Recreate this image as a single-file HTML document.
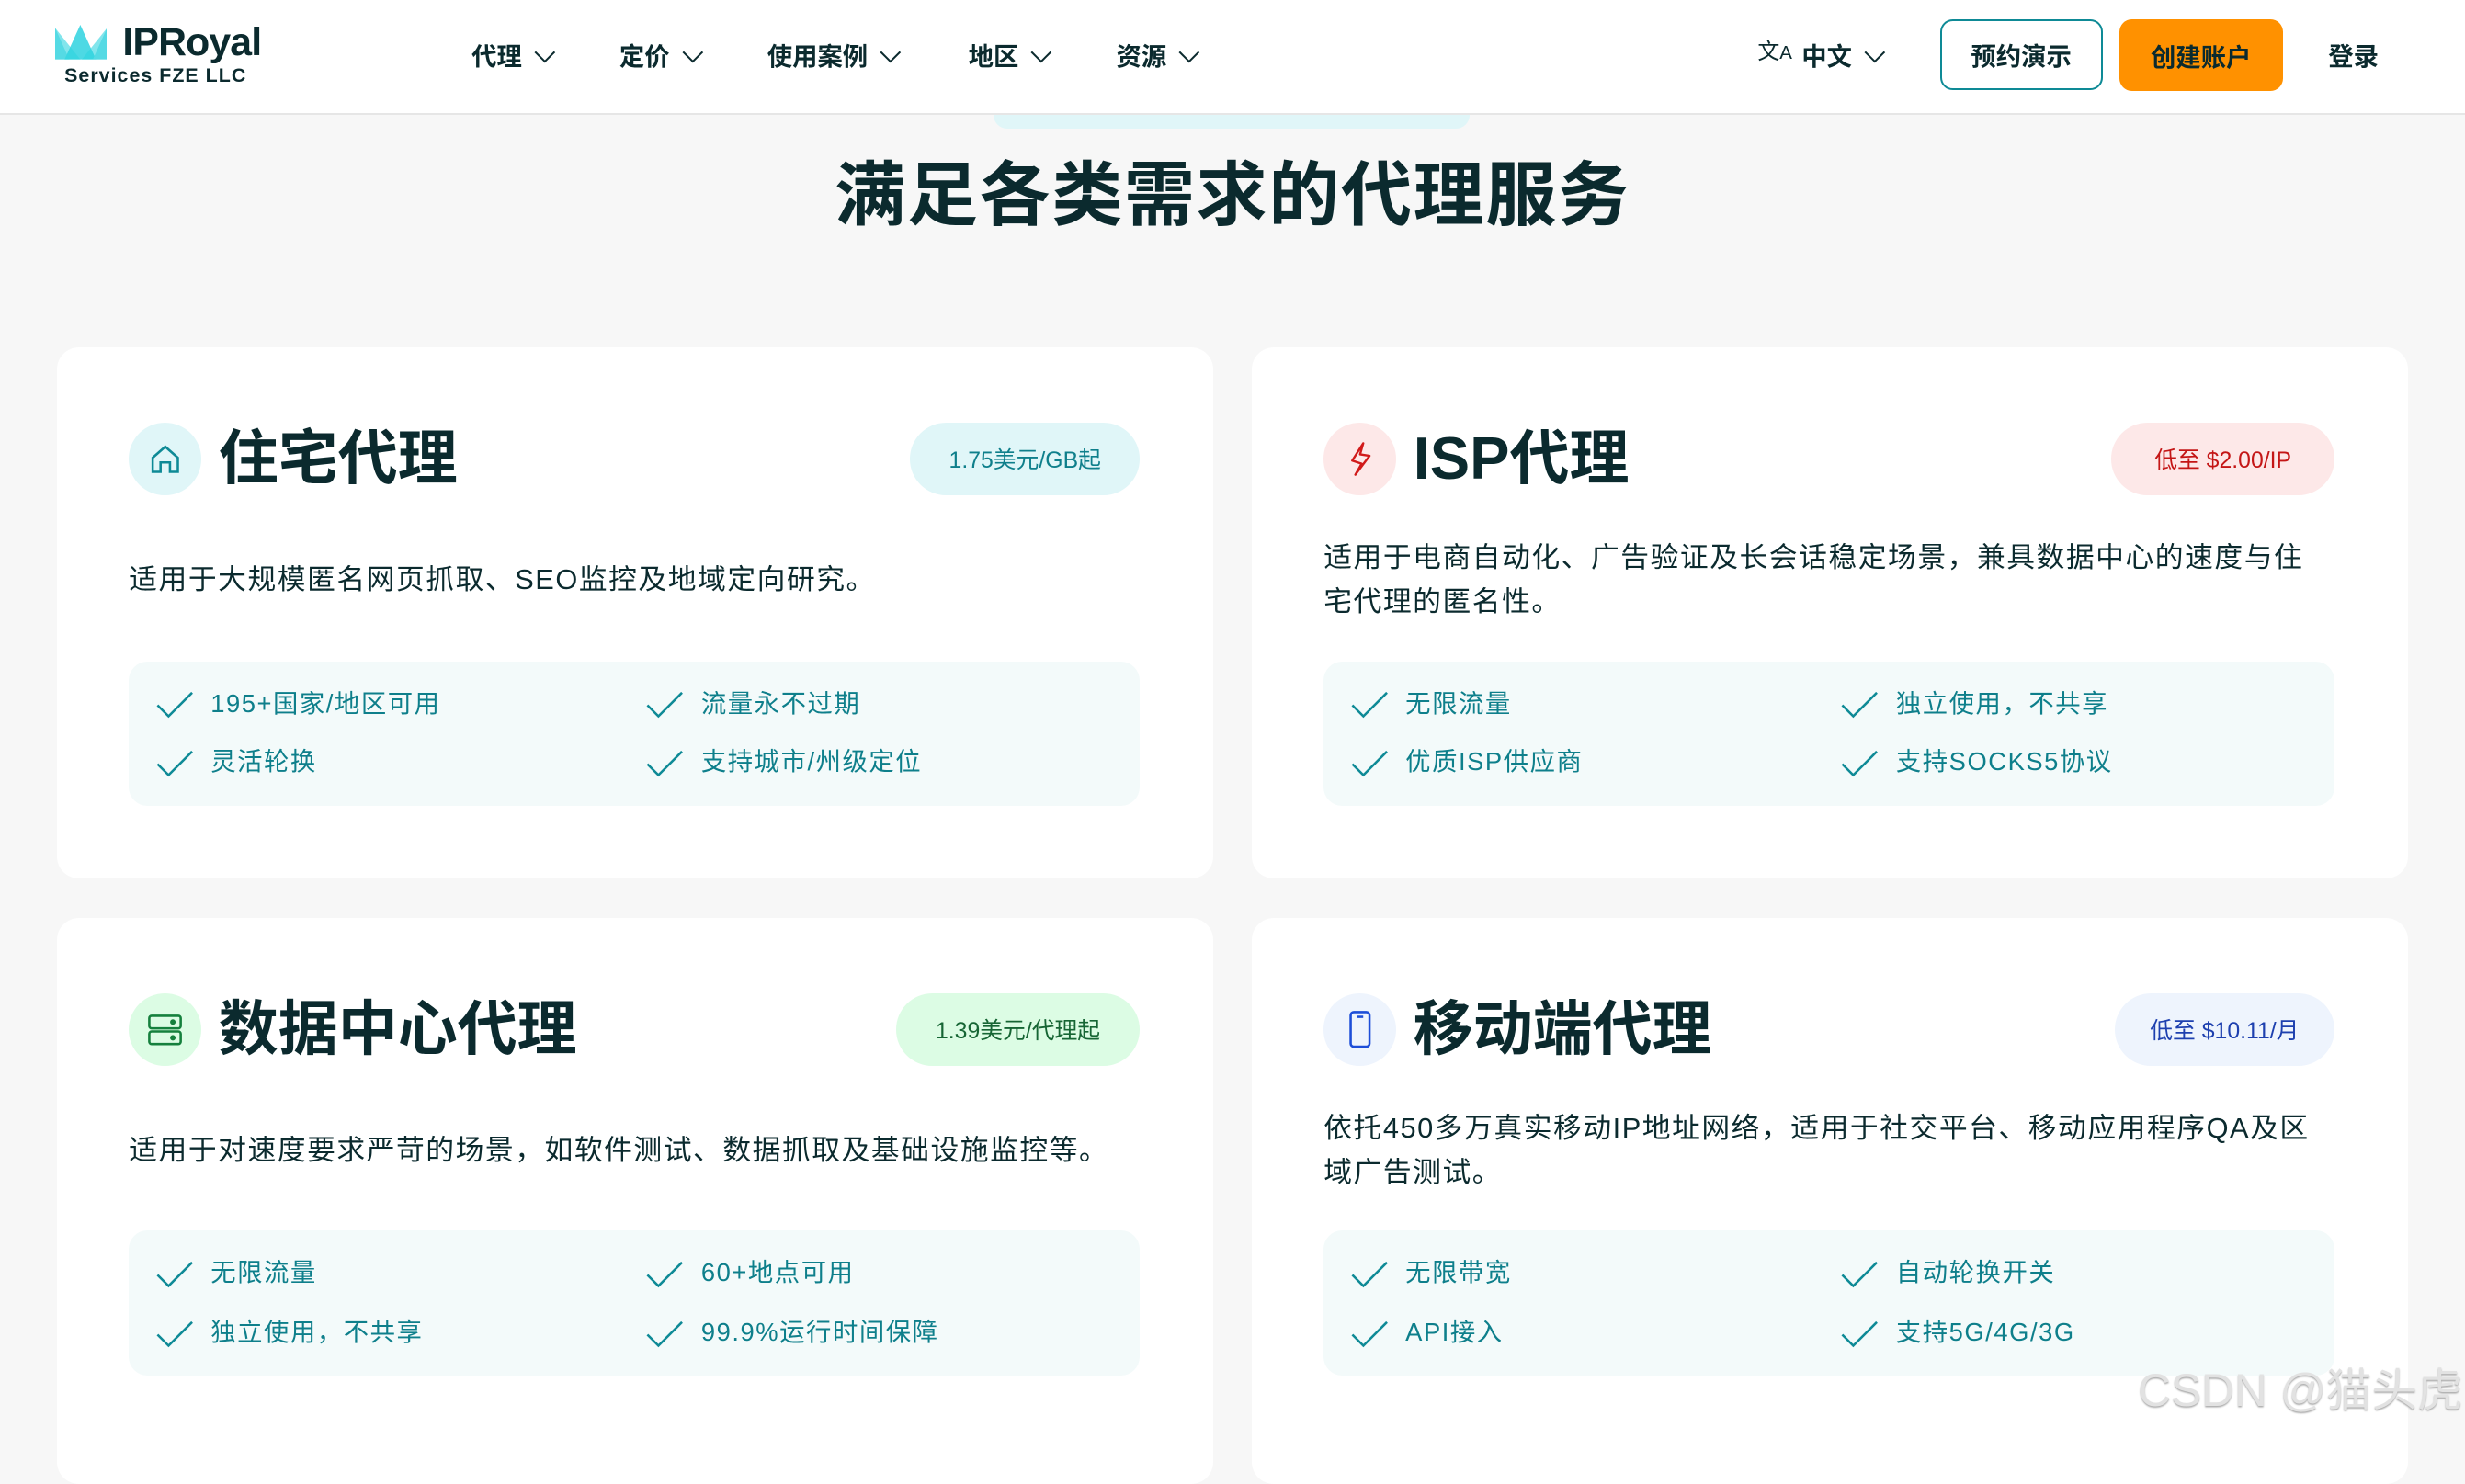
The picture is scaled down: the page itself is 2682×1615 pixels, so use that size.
<!DOCTYPE html>
<html><head><meta charset="utf-8"><style>
html,body{margin:0;padding:0}
body{width:1568px;height:910px;zoom:1.7105;overflow:hidden;background:#f7f7f7;font-family:"Liberation Sans","Noto Sans CJK SC",sans-serif;color:#0b2a2e;position:relative}
.a{position:absolute}
.hdr{left:0;top:0;width:1568px;height:72px;background:#fff;border-bottom:1.5px solid #e6e6e6}
.nav{top:23px;font-size:16px;font-weight:bold;white-space:nowrap}
.chev{display:inline-block;width:8px;height:8px;border-right:1.3px solid #0b2a2e;border-bottom:1.3px solid #0b2a2e;transform:rotate(45deg);margin-left:10px;position:relative;top:-4px}
.card{background:#fff;border-radius:14px}
.ic{width:46px;height:46px;border-radius:50%;display:flex;align-items:center;justify-content:center}
.ttl{font-size:38px;font-weight:bold;white-space:nowrap;line-height:46px}
.badge{height:46px;border-radius:23px;font-size:14.5px;display:flex;align-items:center;justify-content:center;white-space:nowrap}
.desc{font-size:18px;line-height:28px;white-space:nowrap;letter-spacing:.9px}
.feat{background:#f3fafa;border-radius:12px;width:643px;height:92px}
.f{font-size:16px;color:#0e7f8b;white-space:nowrap;line-height:20px;letter-spacing:.9px}
.f svg{position:absolute;left:-36px;top:-1px}
</style></head><body>
<div class="a hdr"></div>
<svg class="a" style="left:35px;top:16px" width="33" height="22" viewBox="0 0 33 22"><path d="M0 2 L9 22 L0 22Z" fill="#8fe3ea"/><path d="M16 0 L6 22 L26 22Z" fill="#4dd9e4"/><path d="M33 2 L24 22 L33 22Z" fill="#8fe3ea"/><path d="M0 2 L16 22 L0 22Z" fill="#2fd3df" opacity=".6"/><path d="M33 2 L17 22 L33 22Z" fill="#2fd3df" opacity=".6"/></svg>
<div class="a" style="left:78px;top:13px;font-size:25px;font-weight:bold;letter-spacing:-.5px">IPRoyal</div>
<div class="a" style="left:41px;top:41px;font-size:12.5px;font-weight:bold;letter-spacing:.6px">Services FZE LLC</div>
<div class="a nav" style="left:300px">代理<span class="chev"></span></div>
<div class="a nav" style="left:394px">定价<span class="chev"></span></div>
<div class="a nav" style="left:488px">使用案例<span class="chev"></span></div>
<div class="a nav" style="left:616px">地区<span class="chev"></span></div>
<div class="a nav" style="left:710px">资源<span class="chev"></span></div>
<div class="a" style="left:1118px;top:25px;font-size:14px;line-height:16px">文<span style="font-size:12px">A</span></div>
<div class="a nav" style="left:1146px">中文<span class="chev"></span></div>
<div class="a" style="left:1234px;top:12px;width:101px;height:43px;border:1.5px solid #0e8a96;border-radius:8px;display:flex;align-items:center;justify-content:center;font-size:16px;font-weight:bold">预约演示</div>
<div class="a" style="left:1348px;top:12px;width:104px;height:46px;background:#ff9100;border-radius:8px;display:flex;align-items:center;justify-content:center;font-size:16px;font-weight:bold">创建账户</div>
<div class="a nav" style="left:1481px">登录</div>
<div class="a" style="left:632px;top:73px;width:303px;height:9px;background:#e0f6f8;border-radius:0 0 14px 14px"></div>
<div class="a" style="left:0;width:1568px;top:96px;text-align:center;font-size:45px;font-weight:bold;line-height:58px;letter-spacing:1px">满足各类需求的代理服务</div>

<div class="a card" style="left:36px;top:221px;width:736px;height:338px"></div>
<div class="a ic" style="left:82px;top:269px;background:#e0f6f8"><svg width="22" height="22" viewBox="0 0 22 22" fill="none" stroke="#0e8a96" stroke-width="1.5"><path d="M3 10 L11 3 L19 10 V19 H14 V13 H8 V19 H3Z"/></svg></div>
<div class="a ttl" style="left:139px;top:269px">住宅代理</div>
<div class="a badge" style="left:579px;top:269px;width:146px;background:#e0f6f8;color:#0e7f8b">1.75美元/GB起</div>
<div class="a desc" style="left:82px;top:355px">适用于大规模匿名网页抓取、SEO监控及地域定向研究。</div>
<div class="a feat" style="left:82px;top:421px"></div>
<div class="a f" style="left:134px;top:438px"><svg width="26" height="22" viewBox="0 0 26 22" fill="none" stroke="#0e8a96" stroke-width="1.5"><path d="M2 12 L9 19 L24 4"/></svg>195+国家/地区可用</div>
<div class="a f" style="left:446px;top:438px"><svg width="26" height="22" viewBox="0 0 26 22" fill="none" stroke="#0e8a96" stroke-width="1.5"><path d="M2 12 L9 19 L24 4"/></svg>流量永不过期</div>
<div class="a f" style="left:134px;top:475px"><svg width="26" height="22" viewBox="0 0 26 22" fill="none" stroke="#0e8a96" stroke-width="1.5"><path d="M2 12 L9 19 L24 4"/></svg>灵活轮换</div>
<div class="a f" style="left:446px;top:475px"><svg width="26" height="22" viewBox="0 0 26 22" fill="none" stroke="#0e8a96" stroke-width="1.5"><path d="M2 12 L9 19 L24 4"/></svg>支持城市/州级定位</div>

<div class="a card" style="left:796px;top:221px;width:736px;height:338px"></div>
<div class="a ic" style="left:842px;top:269px;background:#fde8e8"><svg width="22" height="24" viewBox="0 0 22 24" fill="none" stroke="#d11a1a" stroke-width="1.4" stroke-linejoin="round"><path d="M13 2 L6 13 L12 15 L8 22 L17 10 L11 9Z"/></svg></div>
<div class="a ttl" style="left:899px;top:269px">ISP代理</div>
<div class="a badge" style="left:1343px;top:269px;width:142px;background:#fde8e8;color:#c41616">低至 $2.00/IP</div>
<div class="a desc" style="left:842px;top:341px">适用于电商自动化、广告验证及长会话稳定场景，兼具数据中心的速度与住<br>宅代理的匿名性。</div>
<div class="a feat" style="left:842px;top:421px"></div>
<div class="a f" style="left:894px;top:438px"><svg width="26" height="22" viewBox="0 0 26 22" fill="none" stroke="#0e8a96" stroke-width="1.5"><path d="M2 12 L9 19 L24 4"/></svg>无限流量</div>
<div class="a f" style="left:1206px;top:438px"><svg width="26" height="22" viewBox="0 0 26 22" fill="none" stroke="#0e8a96" stroke-width="1.5"><path d="M2 12 L9 19 L24 4"/></svg>独立使用，不共享</div>
<div class="a f" style="left:894px;top:475px"><svg width="26" height="22" viewBox="0 0 26 22" fill="none" stroke="#0e8a96" stroke-width="1.5"><path d="M2 12 L9 19 L24 4"/></svg>优质ISP供应商</div>
<div class="a f" style="left:1206px;top:475px"><svg width="26" height="22" viewBox="0 0 26 22" fill="none" stroke="#0e8a96" stroke-width="1.5"><path d="M2 12 L9 19 L24 4"/></svg>支持SOCKS5协议</div>

<div class="a card" style="left:36px;top:584px;width:736px;height:360px"></div>
<div class="a ic" style="left:82px;top:632px;background:#dcfce4"><svg width="24" height="22" viewBox="0 0 24 22" fill="none" stroke="#15803d" stroke-width="1.5"><rect x="2" y="2" width="20" height="8" rx="1.5"/><rect x="2" y="12" width="20" height="8" rx="1.5"/><circle cx="17" cy="6" r="1" fill="#15803d"/><circle cx="17" cy="16" r="1" fill="#15803d"/></svg></div>
<div class="a ttl" style="left:139px;top:632px">数据中心代理</div>
<div class="a badge" style="left:570px;top:632px;width:155px;background:#dcfce4;color:#166534">1.39美元/代理起</div>
<div class="a desc" style="left:82px;top:718px">适用于对速度要求严苛的场景，如软件测试、数据抓取及基础设施监控等。</div>
<div class="a feat" style="left:82px;top:783px"></div>
<div class="a f" style="left:134px;top:800px"><svg width="26" height="22" viewBox="0 0 26 22" fill="none" stroke="#0e8a96" stroke-width="1.5"><path d="M2 12 L9 19 L24 4"/></svg>无限流量</div>
<div class="a f" style="left:446px;top:800px"><svg width="26" height="22" viewBox="0 0 26 22" fill="none" stroke="#0e8a96" stroke-width="1.5"><path d="M2 12 L9 19 L24 4"/></svg>60+地点可用</div>
<div class="a f" style="left:134px;top:838px"><svg width="26" height="22" viewBox="0 0 26 22" fill="none" stroke="#0e8a96" stroke-width="1.5"><path d="M2 12 L9 19 L24 4"/></svg>独立使用，不共享</div>
<div class="a f" style="left:446px;top:838px"><svg width="26" height="22" viewBox="0 0 26 22" fill="none" stroke="#0e8a96" stroke-width="1.5"><path d="M2 12 L9 19 L24 4"/></svg>99.9%运行时间保障</div>

<div class="a card" style="left:796px;top:584px;width:736px;height:360px"></div>
<div class="a ic" style="left:842px;top:632px;background:#eef4fd"><svg width="22" height="26" viewBox="0 0 22 26" fill="none" stroke="#1d4ed8" stroke-width="1.5"><rect x="5" y="2" width="12" height="22" rx="2"/><path d="M9 5 H13"/></svg></div>
<div class="a ttl" style="left:899px;top:632px">移动端代理</div>
<div class="a badge" style="left:1345px;top:632px;width:140px;background:#eef4fd;color:#1e40af">低至 $10.11/月</div>
<div class="a desc" style="left:842px;top:704px">依托450多万真实移动IP地址网络，适用于社交平台、移动应用程序QA及区<br>域广告测试。</div>
<div class="a feat" style="left:842px;top:783px"></div>
<div class="a f" style="left:894px;top:800px"><svg width="26" height="22" viewBox="0 0 26 22" fill="none" stroke="#0e8a96" stroke-width="1.5"><path d="M2 12 L9 19 L24 4"/></svg>无限带宽</div>
<div class="a f" style="left:1206px;top:800px"><svg width="26" height="22" viewBox="0 0 26 22" fill="none" stroke="#0e8a96" stroke-width="1.5"><path d="M2 12 L9 19 L24 4"/></svg>自动轮换开关</div>
<div class="a f" style="left:894px;top:838px"><svg width="26" height="22" viewBox="0 0 26 22" fill="none" stroke="#0e8a96" stroke-width="1.5"><path d="M2 12 L9 19 L24 4"/></svg>API接入</div>
<div class="a f" style="left:1206px;top:838px"><svg width="26" height="22" viewBox="0 0 26 22" fill="none" stroke="#0e8a96" stroke-width="1.5"><path d="M2 12 L9 19 L24 4"/></svg>支持5G/4G/3G</div>

<div class="a" style="left:1360px;top:861px;font-size:29px;color:#e2e2e2;text-shadow:0 1px 1px #aaa;white-space:nowrap">CSDN @猫头虎</div>
</body></html>
